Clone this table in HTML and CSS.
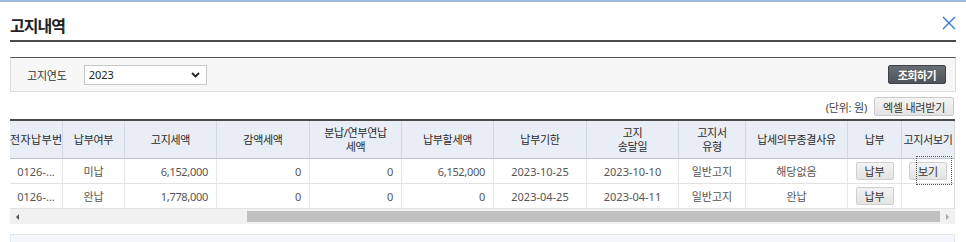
FILE: index.html
```html
<!DOCTYPE html>
<html lang="ko">
<head>
<meta charset="utf-8">
<title>고지내역</title>
<link rel="stylesheet" href="styles.css">
</head>
<body>
<div class="top-line"></div>
<div class="page">
  <div class="title-bar">
    <h1 class="title">고지내역</h1>
    <button class="close" type="button" aria-label="닫기">
      <svg width="14" height="14" viewBox="0 0 14 14"><path d="M1 1 L13 13 M13 1 L1 13" stroke="#2f7bd4" stroke-width="1.4" fill="none"/></svg>
    </button>
  </div>

  <div class="search">
    <span class="search-label">고지연도</span>
    <div class="select">
      <span>2023</span>
      <svg width="9" height="6" viewBox="0 0 9 6"><path d="M1 1 L4.5 4.5 L8 1" stroke="#222" stroke-width="1.8" fill="none"/></svg>
    </div>
    <button class="btn-dark" type="button">조회하기</button>
  </div>

  <div class="toolbar">
    <span class="unit">(단위: 원)</span>
    <button class="btn-light" type="button">엑셀 내려받기</button>
  </div>

  <div class="grid">
    <table class="tbl">
      <colgroup>
        <col class="c53"><col class="c62"><col class="c92"><col class="c93"><col class="c92"><col class="c92"><col class="c93"><col class="c92"><col class="c67"><col class="c102"><col class="c54"><col class="c53">
      </colgroup>
      <thead>
        <tr>
          <th class="clip">전자납부번호</th>
          <th>납부여부</th>
          <th>고지세액</th>
          <th>감액세액</th>
          <th>분납/연부연납<br>세액</th>
          <th>납부할세액</th>
          <th>납부기한</th>
          <th>고지<br>송달일</th>
          <th>고지서<br>유형</th>
          <th>납세의무종결사유</th>
          <th>납부</th>
          <th>고지서보기</th>
        </tr>
      </thead>
      <tbody>
        <tr>
          <td class="ctr">0126-...</td>
          <td class="ctr">미납</td>
          <td class="num">6,152,000</td>
          <td class="num">0</td>
          <td class="num">0</td>
          <td class="num">6,152,000</td>
          <td class="ctr">2023-10-25</td>
          <td class="ctr">2023-10-10</td>
          <td class="ctr">일반고지</td>
          <td class="ctr">해당없음</td>
          <td class="ctr"><button class="btn-cell" type="button">납부</button></td>
          <td class="ctr focus"><button class="btn-cell" type="button">보기</button></td>
        </tr>
        <tr>
          <td class="ctr">0126-...</td>
          <td class="ctr">완납</td>
          <td class="num">1,778,000</td>
          <td class="num">0</td>
          <td class="num">0</td>
          <td class="num">0</td>
          <td class="ctr">2023-04-25</td>
          <td class="ctr">2023-04-11</td>
          <td class="ctr">일반고지</td>
          <td class="ctr">완납</td>
          <td class="ctr"><button class="btn-cell" type="button">납부</button></td>
          <td class="ctr"></td>
        </tr>
      </tbody>
    </table>
    <div class="hscroll">
      <span class="arrow arrow-left"></span>
      <span class="thumb"></span>
      <span class="arrow arrow-right"></span>
    </div>
  </div>

  <div class="bottom-box"></div>
</div>
</body>
</html>
```

FILE: styles.css
```css
* { box-sizing: border-box; }

body {
  margin: 0;
  background: #fff;
  font-family: "Noto Sans", "Noto Sans CJK KR", sans-serif;
  font-size: 11px;
  color: #555;
}

.top-line {
  height: 2px;
  background: #9db8d9;
}

.page {
  padding: 0 10px;
}

.title-bar {
  height: 40px;
  padding-top: 8px;
  display: flex;
  justify-content: space-between;
  align-items: center;
  border-bottom: 2px solid #4a4a4a;
}

.title {
  margin: 0;
  font-size: 16px;
  font-weight: 700;
  color: #222;
  letter-spacing: -1px;
}

.close {
  margin-top: -5px;
  padding: 0;
  border: 0;
  background: none;
  width: 14px;
  height: 14px;
  display: flex;
}

.search {
  margin-top: 15px;
  height: 35px;
  background: #f7f7f7;
  border: 1px solid #dcdcdc;
  border-top-color: #505050;
  display: flex;
  align-items: center;
  padding: 0 9px 0 16px;
}

.search-label {
  color: #333;
  letter-spacing: -0.2px;
  margin-right: 17px;
}

.select {
  width: 123px;
  height: 20px;
  background: #fff;
  border: 1px solid #c8c8c8;
  display: flex;
  align-items: center;
  justify-content: space-between;
  padding: 0 6px 0 4px;
  color: #222;
}

.btn-dark {
  margin-left: auto;
  width: 58px;
  height: 19px;
  padding: 0;
  background: linear-gradient(#686d74, #4f545b);
  border: 1px solid #3e4247;
  border-radius: 2px;
  color: #fff;
  font-family: inherit;
  font-size: 11px;
  font-weight: 700;
  letter-spacing: -0.5px;
}

.toolbar {
  margin-top: 5px;
  height: 19px;
  display: flex;
  justify-content: flex-end;
  align-items: center;
  gap: 7px;
  padding-right: 2px;
}

.unit {
  color: #444;
  letter-spacing: -0.2px;
}

.btn-light {
  width: 80px;
  height: 19px;
  padding: 0;
  background: linear-gradient(#f4f4f4, #e4e4e4);
  border: 1px solid #cacaca;
  border-radius: 2px;
  color: #333;
  font-family: inherit;
  font-size: 11px;
  letter-spacing: -0.2px;
}

.grid {
  margin-top: 3px;
  width: 945px;
}

.tbl {
  width: 945px;
  table-layout: fixed;
  border-collapse: separate;
  border-spacing: 0;
  border-top: 2px solid #4a4a4a;
}

.c53 { width: 53px; }
.c54 { width: 54px; }
.c62 { width: 62px; }
.c67 { width: 67px; }
.c92 { width: 92px; }
.c93 { width: 93px; }
.c102 { width: 102px; }

.tbl th {
  height: 38px;
  padding: 0 1px;
  background: #e8edf6;
  border-right: 1px solid #d2d9e4;
  border-bottom: 1px solid #b8c1ce;
  color: #2a2a2a;
  font-weight: 400;
  line-height: 14px;
  letter-spacing: -0.3px;
  white-space: nowrap;
  overflow: hidden;
}

.tbl th.clip {
  text-align: left;
  padding: 0;
  letter-spacing: 0.4px;
}

.tbl td {
  height: 25px;
  padding: 0 8px;
  border-right: 1px solid #e6e6e6;
  border-bottom: 1px solid #e2e2e2;
  white-space: nowrap;
  overflow: hidden;
}

.tbl td.ctr { text-align: center; padding: 0 2px; }
.tbl td.num { text-align: right; letter-spacing: -0.3px; }

.tbl th:last-child,
.tbl td:last-child { border-right-color: #d8d8d8; }

.tbl td.focus {
  position: relative;
  overflow: visible;
}

.tbl td.focus::after {
  content: "";
  position: absolute;
  left: 14px;
  top: -3px;
  width: 34px;
  height: 27px;
  border: 1px dotted #555;
  pointer-events: none;
}

.btn-cell {
  width: 38px;
  height: 18px;
  padding: 0;
  background: linear-gradient(#f3f3f3, #e3e3e3);
  border: 1px solid #cfcfcf;
  border-radius: 2px;
  color: #333;
  font-family: inherit;
  font-size: 11px;
  vertical-align: middle;
}

.hscroll {
  height: 15px;
  background: #f1f1f1;
  display: flex;
  align-items: center;
}

.arrow {
  width: 15px;
  height: 15px;
  display: flex;
  align-items: center;
  justify-content: center;
}

.arrow::before {
  content: "";
  border-top: 3px solid transparent;
  border-bottom: 3px solid transparent;
}

.arrow-left::before { border-right: 3px solid #505050; }
.arrow-right::before { border-left: 3px solid #a8a8a8; }

.thumb {
  margin-left: 222px;
  width: 695px;
  height: 11px;
  background: #c1c1c1;
}

.arrow-right { margin-left: auto; }

.bottom-box {
  margin-top: 10px;
  width: 945px;
  height: 20px;
  background: #f4f7fb;
  border: 1px solid #e2e7ee;
}
```
